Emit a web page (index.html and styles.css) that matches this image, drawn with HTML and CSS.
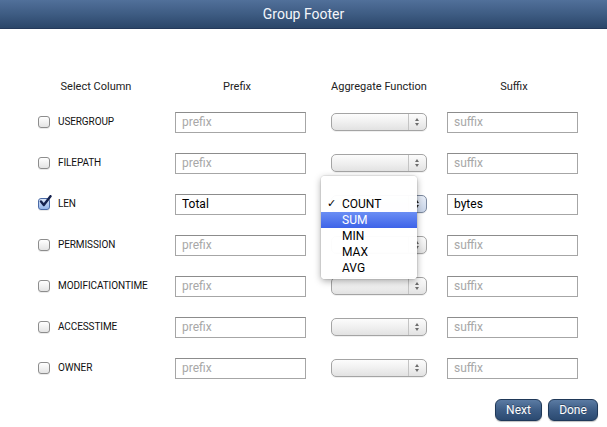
FILE: index.html
```html
<!DOCTYPE html>
<html>
<head>
<meta charset="utf-8">
<title>Group Footer</title>
<link rel="stylesheet" href="styles.css">
</head>
<body>
<div class="page">
  <div class="titlebar">Group Footer</div>
  <div class="content">
    <div class="grid">
      <div class="hdr h1">Select Column</div>
      <div class="hdr h2">Prefix</div>
      <div class="hdr h3">Aggregate Function</div>
      <div class="hdr h4">Suffix</div>

      <label class="col"><span class="cb"></span>USERGROUP</label>
      <input class="field" placeholder="prefix">
      <div class="select"><span class="arrows"></span></div>
      <input class="field" placeholder="suffix">

      <label class="col"><span class="cb"></span>FILEPATH</label>
      <input class="field" placeholder="prefix">
      <div class="select"><span class="arrows"></span></div>
      <input class="field" placeholder="suffix">

      <label class="col"><span class="cb checked"><svg viewBox="0 0 14 14" width="14" height="14"><path d="M3 6.5 L5.8 10 L12.5 1.2" fill="none" stroke="#15224f" stroke-width="2.4" stroke-linecap="round" stroke-linejoin="round"/></svg></span>LEN</label>
      <input class="field" value="Total">
      <div class="select active"><span class="arrows"></span></div>
      <input class="field" value="bytes">

      <label class="col"><span class="cb"></span>PERMISSION</label>
      <input class="field" placeholder="prefix">
      <div class="select"><span class="arrows"></span></div>
      <input class="field" placeholder="suffix">

      <label class="col"><span class="cb"></span>MODIFICATIONTIME</label>
      <input class="field" placeholder="prefix">
      <div class="select"><span class="arrows"></span></div>
      <input class="field" placeholder="suffix">

      <label class="col"><span class="cb"></span>ACCESSTIME</label>
      <input class="field" placeholder="prefix">
      <div class="select"><span class="arrows"></span></div>
      <input class="field" placeholder="suffix">

      <label class="col"><span class="cb"></span>OWNER</label>
      <input class="field" placeholder="prefix">
      <div class="select"><span class="arrows"></span></div>
      <input class="field" placeholder="suffix">
    </div>
    <div class="footer">
      <button class="btn btn-next">Next</button>
      <button class="btn btn-done">Done</button>
    </div>
  </div>
  <ul class="menu">
    <li class="item"><span class="tick">✓</span>COUNT</li>
    <li class="item hl">SUM</li>
    <li class="item">MIN</li>
    <li class="item">MAX</li>
    <li class="item">AVG</li>
  </ul>
</div>
</body>
</html>
```

FILE: styles.css
```css
html, body {
  margin: 0;
  padding: 0;
  background: #ffffff;
}
body {
  font-family: Roboto, "Liberation Sans", sans-serif;
  color: #111;
}
.page {
  position: relative;
  width: 607px;
  height: 427px;
  overflow: hidden;
  background: #fff;
}
.titlebar {
  height: 29px;
  line-height: 28px;
  box-sizing: border-box;
  text-align: center;
  color: #f4f6fa;
  font-size: 14px;
  background: linear-gradient(#51709a, #3e5c83 50%, #2b4669);
  border-bottom: 1px solid #24395a;
}
.content {
  padding: 42px 0 0 38px;
}
.grid {
  display: grid;
  grid-template-columns: 137px 156px 116px 131px;
  grid-template-rows: 30px repeat(7, 41px);
  align-items: center;
}
.hdr {
  font-size: 11px;
  color: #222;
  text-align: center;
}
.h1 { width: 116px; }
.h2 { width: 124px; }
.h3 { width: 96px; }
.h4 { width: 134px; }

.col {
  display: flex;
  align-items: center;
  font-size: 10px;
  color: #111;
  letter-spacing: -0.1px;
}
.cb {
  position: relative;
  width: 12px;
  height: 12px;
  box-sizing: border-box;
  border: 1px solid #8d8d8d;
  border-radius: 3px;
  background: linear-gradient(#ffffff, #e4e4e4);
  margin-right: 8px;
  box-shadow: 0 1px 0 rgba(0,0,0,0.08);
}
.cb.checked {
  border-color: #4a6aa6;
  background: linear-gradient(#dbe7fa, #93b4ea);
}
.cb svg {
  position: absolute;
  left: -1px;
  top: -4px;
}
.field {
  width: 131px;
  height: 21px;
  box-sizing: border-box;
  border: 1px solid #a6a6a6;
  border-top-color: #8c8c8c;
  padding: 0 6px;
  margin: 1px 0 0 0;
  font-family: Roboto, "Liberation Sans", sans-serif;
  font-size: 12px;
  color: #000;
  background: #fff;
  outline: none;
  border-radius: 0;
}
.field::placeholder {
  color: #a8a8a8;
}
.select {
  position: relative;
  width: 96px;
  height: 18px;
  box-sizing: border-box;
  border: 1px solid #a4a4a4;
  border-radius: 5px;
  background: linear-gradient(#fcfcfc, #f0f0f0 50%, #e2e2e2);
  box-shadow: 0 1px 0 rgba(0,0,0,0.06);
}
.select.active {
  border-color: #7d8aa0;
  background: linear-gradient(#e8eef8, #c8d4e8);
}
.arrows {
  position: absolute;
  right: 0;
  top: 0;
  bottom: 0;
  width: 17px;
  border-left: 1px solid #c4c4c4;
}
.arrows::before, .arrows::after {
  content: "";
  position: absolute;
  left: 6px;
  width: 0;
  height: 0;
  border-left: 2.5px solid transparent;
  border-right: 2.5px solid transparent;
}
.arrows::before {
  top: 4px;
  border-bottom: 3px solid #6d6d6d;
}
.arrows::after {
  top: 9px;
  border-top: 3px solid #6d6d6d;
}
.select.active .arrows::before { border-bottom-color: #222; }
.select.active .arrows::after { border-top-color: #222; }

.footer {
  display: flex;
  justify-content: flex-end;
  gap: 6px;
  margin-top: 11px;
  padding-right: 9px;
}
.btn {
  height: 22px;
  box-sizing: border-box;
  border: 1px solid #1f3858;
  border-radius: 6px;
  background: linear-gradient(#5b7ba3, #3d5d86 50%, #2b4a71);
  color: #fff;
  font-family: Roboto, "Liberation Sans", sans-serif;
  font-size: 12px;
  padding: 0;
  text-shadow: 0 -1px 0 rgba(0,0,0,0.35);
  box-shadow: 0 1px 1px rgba(0,0,0,0.25);
}
.btn-next { width: 47px; }
.btn-done { width: 50px; }

.menu {
  position: absolute;
  left: 321px;
  top: 176px;
  width: 96px;
  height: 103px;
  box-sizing: border-box;
  margin: 0;
  padding: 20px 0 0 0;
  list-style: none;
  background: rgba(255,255,255,0.97);
  border-radius: 4px;
  box-shadow: 0 2px 7px rgba(0,0,0,0.35), 0 0 0 1px rgba(0,0,0,0.06);
}
.item {
  position: relative;
  height: 16px;
  line-height: 16px;
  padding-left: 21px;
  font-size: 12px;
  color: #000;
}
.item.hl {
  color: #fff;
  background: linear-gradient(#6a8ef4, #3d63e8);
}
.tick {
  position: absolute;
  left: 6px;
  top: 0;
  font-family: "DejaVu Sans", sans-serif;
  font-size: 11px;
}
```
